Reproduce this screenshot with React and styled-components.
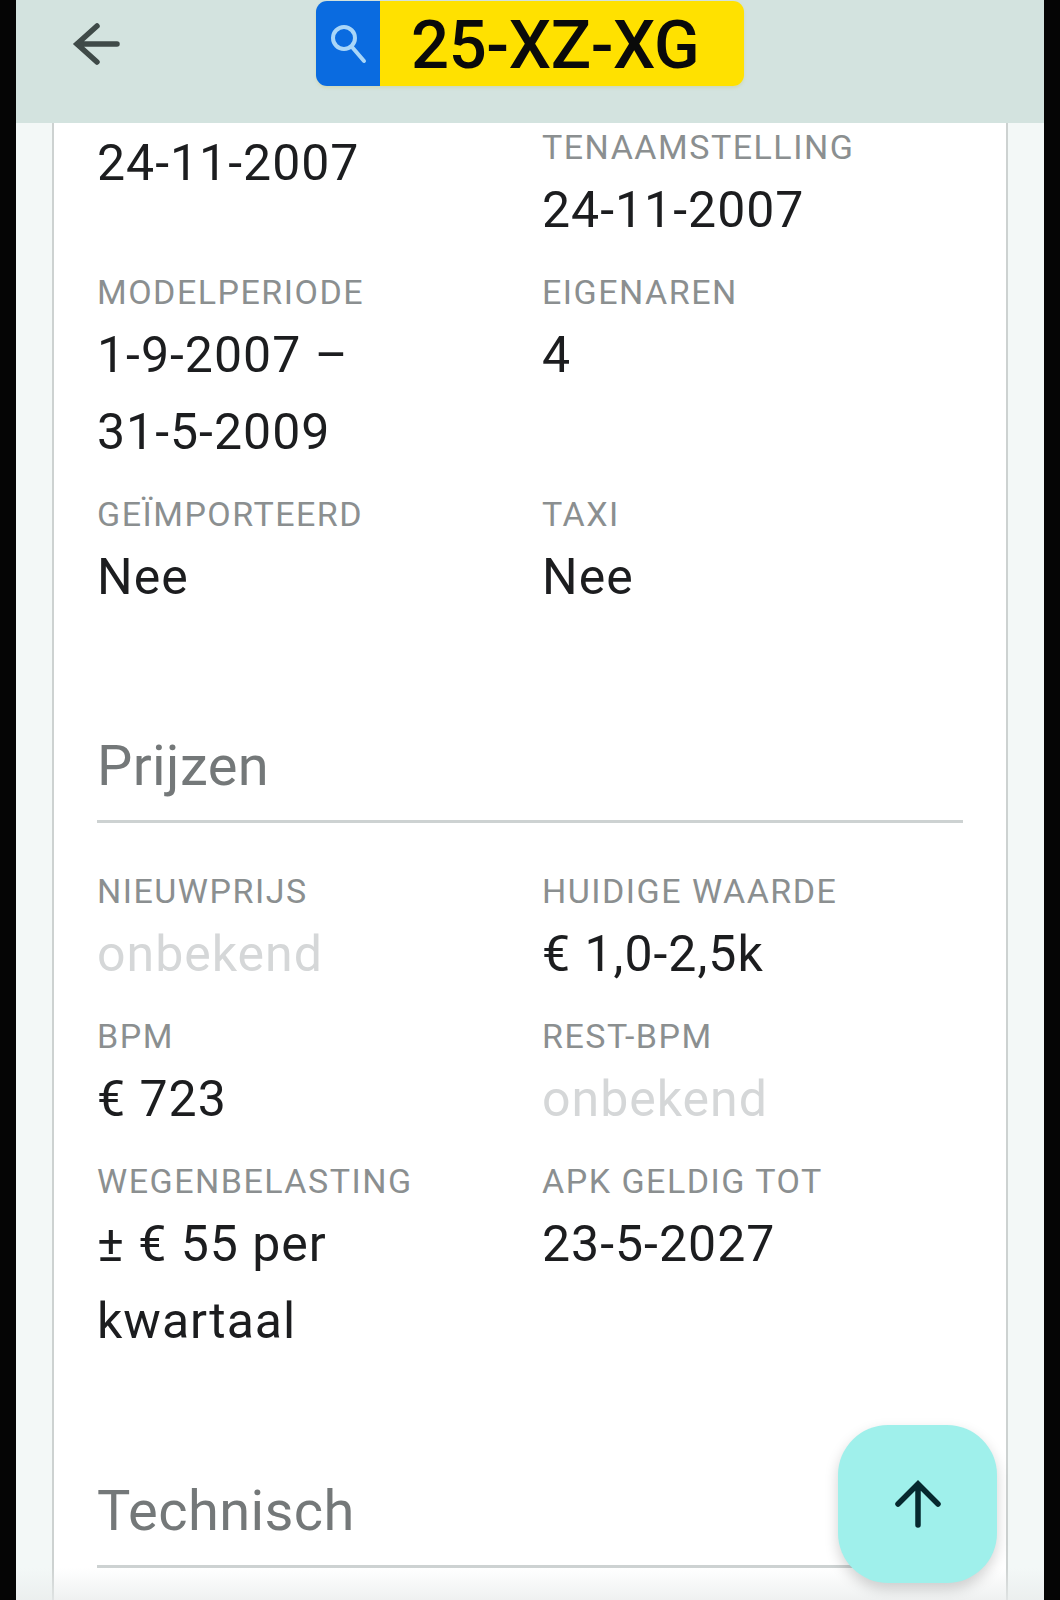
import React from "react";
import styled, { createGlobalStyle } from "styled-components";

const Global = createGlobalStyle`
  html, body { margin: 0; padding: 0; background: #050505; }
  body { font-family: Roboto, "Liberation Sans", sans-serif; }
`;
const Screen = styled.div`
  position: relative; width: 1028px; height: 1600px; margin: 0 16px; background: #f3f8f7;
  overflow: hidden; display: flex; flex-direction: column;
`;
const Header = styled.header`
  height: 123px; flex: none; background: #d3e3df; position: relative;
  display: flex; justify-content: center; padding-top: 1px; box-sizing: border-box;
`;
const BackButton = styled.div`
  position: absolute; left: 54px; top: 18px; width: 52px; height: 52px; color: #3f4a48;
`;
const Plate = styled.div`
  display: flex; width: 428px; height: 85px; border-radius: 11px; overflow: hidden;
  box-shadow: 0 2px 3px rgba(200, 200, 120, .35);
`;
const PlateSide = styled.div`
  width: 64px; background: #0a6be0; display: flex; align-items: center; justify-content: center; color: #a9d6f8;
`;
const PlateNumber = styled.div`
  flex: 1; background: #ffe100; color: #0a0a0a; font-family: Roboto, "Liberation Sans", sans-serif; font-weight: 500;
  font-size: 67px; line-height: 88px; padding-left: 31px; letter-spacing: -0.4px;
`;
const Card = styled.main`
  flex: 1; margin: 0 36px; background: #fff; border-left: 2px solid #cdd2d1; border-right: 2px solid #cdd2d1;
  padding: 0 43px; min-height: 0;
`;
const Grid = styled.div`
  display: grid; grid-template-columns: 445px 1fr; row-gap: 19px;
`;
const Cell = styled.div`
  padding-top: ${p => p.$offset || 0}px;
`;
const Label = styled.div`
  font-size: 34px; line-height: 49px; letter-spacing: 1.5px; color: #8b8f90; white-space: nowrap;
`;
const Value = styled.div`
  font-size: 50px; line-height: 77px; letter-spacing: 1px; color: ${p => (p.$muted ? "#d5d7d8" : "#1c1d1f")};
`;
const Section = styled.h2`
  margin: ${p => p.$top}px 0 0; font-weight: 400; font-size: 56px; line-height: 66px; color: #747879;
  padding-bottom: 21px; border-bottom: 3px solid #cdd2d2; letter-spacing: .4px;
`;
const SectionBody = styled.div`
  margin-top: 44px;
`;
const BottomFade = styled.div`
  position: absolute; left: 0; right: 0; bottom: 0; height: 32px;
  background: linear-gradient(to bottom, rgba(235,238,238,0), rgba(232,235,235,.7));
`;
const Fab = styled.button`
  position: absolute; left: 822px; top: 1425px; width: 159px; height: 158px; border: 0; border-radius: 50px;
  background: #9ff0eb; color: #06282e; display: flex; align-items: center; justify-content: center; padding: 0;
  box-shadow: 0 6px 14px rgba(0, 0, 0, .18);
`;

const Item = ({ label, value, muted, offset }) => (
  <Cell $offset={offset}>
    {label && <Label>{label}</Label>}
    <Value $muted={muted}>{value}</Value>
  </Cell>
);

export default function App() {
  return (
    <>
      <Global />
      <Screen>
        <Header>
          <BackButton>
            <svg width="52" height="52" viewBox="0 0 52 52" fill="none" stroke="currentColor" strokeWidth="5.5" strokeLinecap="round">
              <path d="M7 26H47M27 8L7 26L27 44" />
            </svg>
          </BackButton>
          <Plate>
            <PlateSide>
              <svg width="38" height="44" viewBox="0 0 38 44" fill="none" stroke="currentColor" strokeWidth="4" strokeLinecap="round">
                <circle cx="15" cy="16" r="11" />
                <path d="M23 25L35 39" />
              </svg>
            </PlateSide>
            <PlateNumber>25-XZ-XG</PlateNumber>
          </Plate>
        </Header>
        <Card>
          <Grid>
            <Item value="24-11-2007" offset={2} />
            <Item label="TENAAMSTELLING" value="24-11-2007" />
            <Item label="MODELPERIODE" value={<>1-9-2007 –<br />31-5-2009</>} />
            <Item label="EIGENAREN" value="4" />
            <Item label="GEÏMPORTEERD" value="Nee" />
            <Item label="TAXI" value="Nee" />
          </Grid>
          <Section $top={117}>Prijzen</Section>
          <SectionBody>
            <Grid>
              <Item label="NIEUWPRIJS" value="onbekend" muted />
              <Item label="HUIDIGE WAARDE" value="€ 1,0-2,5k" />
              <Item label="BPM" value="€ 723" />
              <Item label="REST-BPM" value="onbekend" muted />
              <Item label="WEGENBELASTING" value={<>± € 55 per<br />kwartaal</>} />
              <Item label="APK GELDIG TOT" value="23-5-2027" />
            </Grid>
          </SectionBody>
          <Section $top={118}>Technisch</Section>
        </Card>
        <BottomFade />
        <Fab aria-label="Naar boven">
          <svg width="50" height="50" viewBox="0 0 50 50" fill="none" stroke="currentColor" strokeWidth="5.5" strokeLinecap="round">
            <path d="M25 46V6M5 25L25 5L45 25" />
          </svg>
        </Fab>
      </Screen>
    </>
  );
}
